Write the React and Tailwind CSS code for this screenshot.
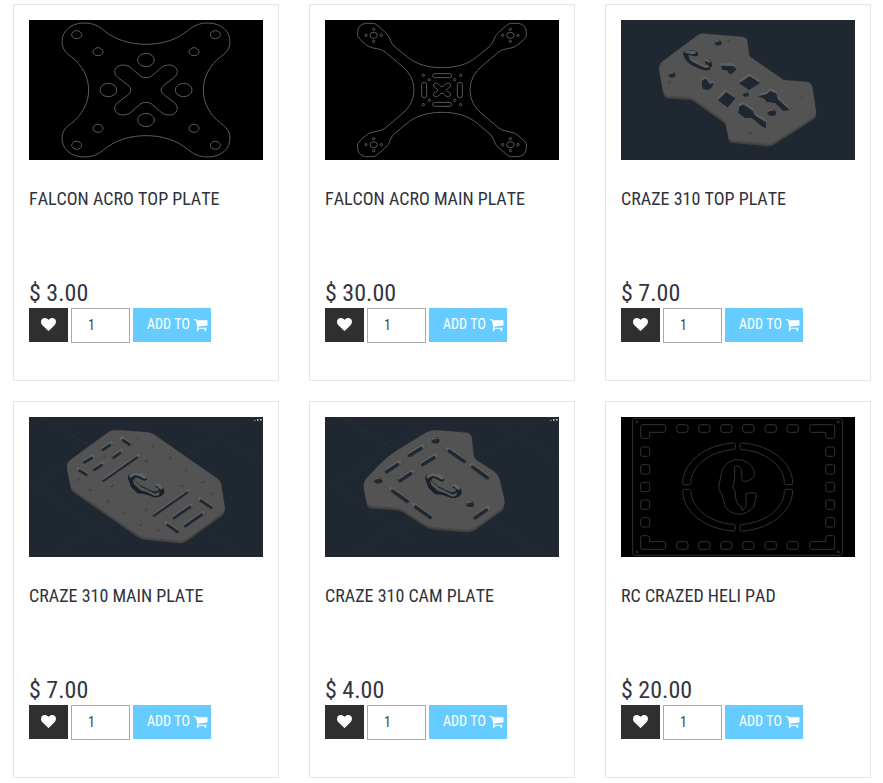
import { useId } from 'react';

const HEART = 'M896 1664q-26 0-44-18l-624-602q-10-8-27.5-26t-55.5-65.5-68-97.5-53.5-121-23.5-138q0-220 127-344t351-124q62 0 126.5 21.5t120 58 95.5 68.5 76 68q36-36 76-68t95.5-68.5 120-58 126.5-21.5q224 0 351 124t127 344q0 221-229 450l-623 600q-18 18-44 18z';
const CART = 'M704 1536q0 52-38 90t-90 38-90-38-38-90 38-90 90-38 90 38 38 90zm896 0q0 52-38 90t-90 38-90-38-38-90 38-90 90-38 90 38 38 90zm128-1088v512q0 24-16.5 42.5t-40.5 21.5l-1044 122q13 60 13 70 0 16-24 64h920q26 0 45 19t19 45-19 45-45 19h-1024q-26 0-45-19t-19-45q0-11 8-31.5t16-36 21.5-40 15.5-29.5l-177-823h-204q-26 0-45-19t-19-45 19-45 45-19h256q16 0 28.5 6.5t19.5 15.5 13 24.5 8 26 5.5 29.5 4.5 26h1201q26 0 45 19t19 45z';

// Repeats a quarter drawing in all four corners around (cx, cy)
function Mirror({ cx, cy, children }) {
  return (
    <>
      <g>{children}</g>
      <g transform={`translate(${cx * 2} 0) scale(-1 1)`}>{children}</g>
      <g transform={`translate(0 ${cy * 2}) scale(1 -1)`}>{children}</g>
      <g transform={`translate(${cx * 2} ${cy * 2}) scale(-1 -1)`}>{children}</g>
    </>
  );
}

function Drawing({ viewBox, bg, title, children }) {
  return (
    <svg viewBox={viewBox} preserveAspectRatio="xMidYMid slice" role="img" aria-label={title} className={`block w-full h-[140px] ${bg}`}>
      {children}
    </svg>
  );
}

// A cut-out in a solid plate: lit inner wall with the floor showing below it
function Cutout({ d, dx = 1, dy = 8 }) {
  const id = useId();
  return (
    <g>
      <clipPath id={id}><path d={d} /></clipPath>
      <path d={d} fill="#5f5f5f" />
      <path d={d} fill="#1f2832" clipPath={`url(#${id})`} transform={`translate(${dx} ${dy})`} />
    </g>
  );
}

function Slot({ x1, y1, x2, y2, w = 15 }) {
  const down = y2 > y1;
  return (
    <g strokeLinecap="round">
      <line x1={x1} y1={y1} x2={x2} y2={y2} stroke="#444546" strokeWidth={w} />
      <line x1={x1} y1={y1 - 1} x2={x2} y2={y2 - 1} stroke="#606060" strokeWidth={w - 3} />
      <line x1={down ? x1 + 5 : x1} y1={down ? y1 + 6 : y1 + 3} x2={down ? x2 : x2 - 5} y2={down ? y2 + 2 : y2 + 6} stroke="#1f2832" strokeWidth={w - 7} />
    </g>
  );
}

function Hole({ x, y, rx = 5, ry = 5 }) {
  return (
    <g>
      <ellipse cx={x} cy={y} rx={rx} ry={ry} fill="#383a3c" />
      <ellipse cx={x - rx / 4} cy={y - ry / 4} rx={rx * 0.65} ry={ry * 0.7} fill="#5c5c5c" />
      {rx > 7 && <ellipse cx={x + 1} cy={y + ry / 4} rx={rx * 0.85} ry={ry * 0.65} fill="#1f2832" />}
    </g>
  );
}

function Plate({ d }) {
  return (
    <>
      <path d={d} fill="#3f3f3f" transform="translate(0 9)" />
      <path d={d} fill="#484848" transform="translate(0 5)" />
      <path d={d} fill="#535353" stroke="#585858" strokeWidth="1" />
    </>
  );
}

// The hooked "C" emblem cut through the solid plates
function Emblem({ x, y }) {
  return (
    <g transform={`translate(${x} ${y})`}>
      <path d="M0 18C-2 6 10 0 25 0C42 0 58 10 57 20C55 27 47 27 40 21L25 15C18 16 17 20 21 25L37 39L48 44L61 51L76 57C86 59 92 56 92 49L80 42C76 36 82 31 90 31C101 36 110 50 109 60C106 70 94 77 76 75L62 69L48 65L28 63L9 44Z" fill="#18212a" />
      <path d="M3 13C4 4 14 0 25 0C42 0 58 9 57 16C50 22 45 20 40 14L25 9Q14 8 9 17Z" fill="#616161" />
      <path d="M14 20L40 44L60 53L78 63Q90 65 94 57V67Q86 73 75 69L58 60L38 54L18 36Z" fill="#575757" />
      <path d="M80 42C76 36 82 31 90 31C98 34 103 40 105 47L98 52L92 46L86 40Z" fill="#626262" />
    </g>
  );
}

function ViewportGrid() {
  return (
    <>
      <path d="M470 200L760 20M45 270L420 30M110 475L320 340M480 330L730 480M520 40L780 210M45 240L310 420" stroke="#2a343f" strokeWidth="1.5" fill="none" opacity="0.6" />
      <path d="M85 45L250 145" stroke="#29413f" strokeWidth="1.5" />
    </>
  );
}

function ViewControls({ x, y }) {
  return (
    <g fill="#b9bdc2">
      <rect x={x} y={y + 3} width="5" height="2" />
      <rect x={x + 9} y={y} width="5" height="5" />
      <rect x={x + 18} y={y} width="5" height="5" />
    </g>
  );
}

function FalconTop({ title }) {
  return (
    <Drawing viewBox="57 60 702 420" bg="bg-black" title={title}>
      <g fill="none" stroke="#6e6e6e" strokeWidth="2.5">
        <Mirror cx={408} cy={270}>
          <path d="M408 133C455 133 500 120 536 90C556 73 575 69 594 69C635 69 660 95 660 125C660 148 645 162 632 170C600 195 580 230 580 270" />
          <ellipse cx="616" cy="104" rx="15" ry="12" />
          <ellipse cx="552" cy="155" rx="15" ry="12" />
          <path d="M408 233Q419 233 425 228L456 201Q465 195 477 195C492 195 502 204 502 215Q502 225 493 232L460 257Q453 264 453 270" />
        </Mirror>
        <ellipse cx="408" cy="180" rx="25" ry="20" />
        <ellipse cx="408" cy="360" rx="25" ry="20" />
        <ellipse cx="521" cy="270" rx="25" ry="20" />
        <ellipse cx="295" cy="270" rx="25" ry="20" />
      </g>
    </Drawing>
  );
}

function FalconMain({ title }) {
  return (
    <Drawing viewBox="45 60 702 420" bg="bg-black" title={title}>
      <g fill="none" stroke="#6a6a6a" strokeWidth="2.5">
        <Mirror cx={396} cy={270}>
          <path d="M396 203C440 203 475 192 500 171L540 138Q548 130 552 118Q556 105 565 98L590 76Q596 70 605 70H625Q649 74 649 97V108Q645 117 630 129L615 140Q606 144 592 146Q575 148 565 157L520 195Q480 225 480 270" />
          <ellipse cx="601" cy="106" rx="11" ry="9" />
          <circle cx="578" cy="106" r="3.5" />
          <circle cx="624" cy="106" r="3.5" />
          <circle cx="601" cy="88" r="3.5" />
          <circle cx="601" cy="124" r="3.5" />
          <circle cx="452" cy="226" r="3.5" />
          <circle cx="434" cy="239" r="3.5" />
          <path d="M396 260Q400 260 403 256L410 250Q416 246 421 253Q424 259 418 263L412 266Q408 268 408 270" />
        </Mirror>
        <rect x="368" y="221" width="57" height="12" rx="6" />
        <rect x="368" y="307" width="57" height="12" rx="6" />
        <rect x="442" y="247" width="15" height="46" rx="7" />
        <rect x="335" y="247" width="15" height="46" rx="7" />
      </g>
    </Drawing>
  );
}

function CrazeTop({ title }) {
  return (
    <Drawing viewBox="48 60 702 420" bg="bg-[#1f2731]" title={title}>
      <Plate d="M292 101L415 111Q427 114 427 126L432 168L535 240L610 247Q618 249 621 258L633 335Q634 343 625 350L505 427Q497 431 485 430L380 420Q370 416 370 406L363 372Q362 362 350 355L265 295Q258 290 245 290L190 287Q178 284 175 274L163 205Q162 193 172 185L275 108Q283 101 292 101Z" />
      <path d="M235 157Q240 151 250 153C262 148 280 153 280 165Q274 171 266 168L250 164L254 176L276 189L288 195Q302 202 306 195L298 185Q298 177 306 175C317 177 323 190 321 198Q316 202 314 209Q300 213 287 208L260 196Q241 183 235 165Z" fill="#1b242d" />
      <path d="M239 158Q241 151 250 154Q267 149 275 156Q268 164 260 163L248 160ZM252 173L277 186L288 192Q301 199 307 194L314 200Q306 206 296 202L280 194L262 185Q254 181 252 173ZM298 185Q297 177 306 175Q314 178 317 186L311 189L306 184Z" fill="#5e5e5e" />
      <Cutout d="M347 191Q354 186 361 189H383Q393 195 393 201L380 214Q370 217 366 204L350 202Z" />
      <Cutout d="M288 235Q294 227 304 230Q309 237 313 243L324 240Q326 248 316 259Q305 266 292 258L288 247Z" />
      <Cutout d="M433 220L465 241L431 263L400 242Z" />
      <Cutout d="M361 267L389 287L365 315L335 293Z" dx={3} />
      <Cutout d="M458 281L485 273L494 264L513 272L518 289L555 323L534 325L509 302L483 298L478 290Z" />
      <Cutout d="M401 311L414 305L443 324L449 338L482 359V377L470 372L439 346L418 346L398 330Z" />
      <Hole x={339} y={128} rx={11} ry={9} />
      <Hole x={201} y={224} rx={11} ry={9} />
      <Hole x={422} y={282} rx={10} ry={8} />
      <Hole x={500} y={337} rx={14} ry={11} />
      <Hole x={370} y={121} />
      <Hole x={192} y={246} />
      <Hole x={589} y={289} />
      <Hole x={433} y={398} />
    </Drawing>
  );
}

const MAIN_SLOTS = [
  [279, 146, 305, 129], [223, 184, 250, 168], [311, 169, 335, 153], [253, 206, 280, 189],
  [335, 115, 358, 131], [204, 206, 229, 222], [568, 296, 604, 321], [468, 369, 502, 393],
  [492, 351, 545, 315], [526, 375, 580, 338],
];

const MAIN_HOLES = [
  [381, 112], [427, 138], [478, 174], [526, 208], [577, 244], [602, 280], [283, 169], [408, 182],
  [203, 237], [240, 267], [304, 256], [292, 303], [340, 337], [391, 373], [443, 389], [408, 327], [514, 256],
];

function CrazeMain({ title }) {
  return (
    <Drawing viewBox="57 51 702 420" bg="bg-[#1f2731]" title={title}>
      <ViewportGrid />
      <Plate d="M305 92Q315 90 326 91L410 97Q425 99 434 105L618 233Q630 240 633 252L644 320Q645 333 633 341L531 415Q520 423 505 421L405 411Q391 409 381 401L192 270Q184 264 181 252L171 200Q170 189 178 182L292 99Q298 94 305 92Z" />
      {MAIN_SLOTS.map(([x1, y1, x2, y2]) => (
        <Slot key={`${x1}-${y1}`} x1={x1} y1={y1} x2={x2} y2={y2} />
      ))}
      <Slot x1={280} y1={240} x2={386} y2={166} w={13} />
      <Slot x1={432} y1={344} x2={537} y2={271} w={13} />
      <Emblem x={354} y={217} />
      {MAIN_HOLES.map(([x, y]) => <Hole key={`${x}-${y}`} x={x} y={y} />)}
      <ViewControls x={732} y={57} />
    </Drawing>
  );
}

const CAM_SLOTS = [
  [299, 163, 338, 139], [338, 191, 377, 167], [230, 212, 268, 188], [270, 239, 307, 215],
  [413, 147, 463, 182], [483, 195, 532, 231], [243, 267, 292, 302], [312, 315, 361, 350],
  [496, 350, 534, 324],
];

function CrazeCam({ title }) {
  return (
    <Drawing viewBox="45 51 702 420" bg="bg-[#1f2731]" title={title}>
      <ViewportGrid />
      <Plate d="M350 97Q365 90 380 91L470 98Q484 101 485 113L490 165Q492 176 502 182L553 215Q564 223 568 237L583 300Q585 313 575 325L495 382Q483 389 468 388L370 380Q357 378 345 371L280 329Q268 322 252 321L185 317Q173 315 170 302L162 262Q160 248 168 237L205 198Q225 175 260 152Z" />
      {CAM_SLOTS.map(([x1, y1, x2, y2]) => (
        <Slot key={`${x1}-${y1}`} x1={x1} y1={y1} x2={x2} y2={y2} w={17} />
      ))}
      <Emblem x={346} y={219} />
      <Hole x={376} y={121} rx={13} ry={10} />
      <Hole x={204} y={241} rx={13} ry={10} />
      <Hole x={480} y={312} rx={13} ry={10} />
      <ViewControls x={720} y={57} />
    </Drawing>
  );
}

function HeliPad({ title }) {
  return (
    <Drawing viewBox="48 51 702 420" bg="bg-black" title={title}>
      <g fill="none" stroke="#3c3c3c" strokeWidth="2.5">
        <rect x="83" y="55" width="629" height="411" rx="6" />
        <Mirror cx={398} cy={261}>
          <path d="M113 74H176Q182 74 182 80V91Q182 97 176 97H134V109Q133 115 127 115H113Q107 115 107 109V80Q107 74 113 74Z" />
          <circle cx="96" cy="66" r="3" />
          <path d="M405 144V133Q405 129 412 129C500 135 563 190 563 250Q563 254 558 254H542Q538 252 538 248C538 195 475 152 412 149Q405 149 405 144Z" />
        </Mirror>
        {[232, 298, 364, 430, 497, 563].map(x => (
          <g key={x}>
            <rect x={x - 17} y="74" width="34" height="23" rx="7" />
            <rect x={x - 17} y="425" width="34" height="23" rx="7" />
          </g>
        ))}
        {[155, 208, 261, 314, 367].map(y => (
          <g key={y}>
            <rect x="107" y={y - 14} width="27" height="28" rx="6" />
            <rect x="662" y={y - 14} width="27" height="28" rx="6" />
          </g>
        ))}
        <path d="M395 179C425 178 448 200 448 222C448 235 432 244 418 244Q411 243 411 236L409 208Q405 200 395 198L389 201V235L384 262L390 272L392 295L398 312L407 318L412 332Q424 326 424 310L422 282Q435 276 448 279L455 283L450 305L446 320Q425 343 402 343Q375 340 362 322L352 288L341 265L345 240L352 208Q370 180 395 179Z" />
      </g>
    </Drawing>
  );
}

const products = [
  { id: 'falcon-top', name: 'FALCON ACRO TOP PLATE', price: '3.00', Picture: FalconTop },
  { id: 'falcon-main', name: 'FALCON ACRO MAIN PLATE', price: '30.00', Picture: FalconMain },
  { id: 'craze-top', name: 'CRAZE 310 TOP PLATE', price: '7.00', Picture: CrazeTop },
  { id: 'craze-main', name: 'CRAZE 310 MAIN PLATE', price: '7.00', Picture: CrazeMain },
  { id: 'craze-cam', name: 'CRAZE 310 CAM PLATE', price: '4.00', Picture: CrazeCam },
  { id: 'heli-pad', name: 'RC CRAZED HELI PAD', price: '20.00', Picture: HeliPad },
];

function ProductCard({ product }) {
  const { id, name, price, Picture } = product;

  return (
    <article className="border border-[#e5e5e5] px-[15px] pt-[15px] pb-[37px]">
      <a href={`#${id}`} className="block">
        <Picture title={name} />
      </a>
      <h2 className="mt-6 min-h-[94px] text-[18px] leading-[30px] text-[#2f323b]">
        <a href={`#${id}`}>{name}</a>
      </h2>
      <div className="text-[24px] leading-[30px] text-[#33363f]">$ {price}</div>
      <div className="flex items-start gap-[3px]">
        <button type="button" aria-label="Add to wishlist" className="flex items-center justify-center w-[39px] h-[34px] pb-0.5 bg-[#2f2f2f] text-white cursor-pointer">
          <svg viewBox="0 0 1792 1792" className="w-[15px] h-[15px] fill-current"><path d={HEART} /></svg>
        </button>
        <input
          type="text"
          defaultValue="1"
          aria-label={`Quantity of ${name}`}
          className="w-[59px] h-[35px] border border-[#a9a9a9] bg-white pl-4 pb-0.5 text-[14px] text-[#444]"
        />
        <button type="button" className="flex items-center gap-[3px] h-[34px] pl-[14px] pr-[3px] pb-0.5 bg-[#66ccff] text-[14px] text-white whitespace-nowrap cursor-pointer">
          ADD TO
          <svg viewBox="0 0 1792 1792" className="w-[15px] h-[15px] fill-current"><path d={CART} /></svg>
        </button>
      </div>
    </article>
  );
}

export default function App() {
  return (
    <main className="min-h-screen bg-white pl-[13px] pr-3 pt-1 font-['Roboto_Condensed',Roboto,sans-serif] [font-kerning:none]">
      <div className="grid grid-cols-3 gap-x-[30px] gap-y-5">
        {products.map(product => <ProductCard key={product.id} product={product} />)}
      </div>
    </main>
  );
}
